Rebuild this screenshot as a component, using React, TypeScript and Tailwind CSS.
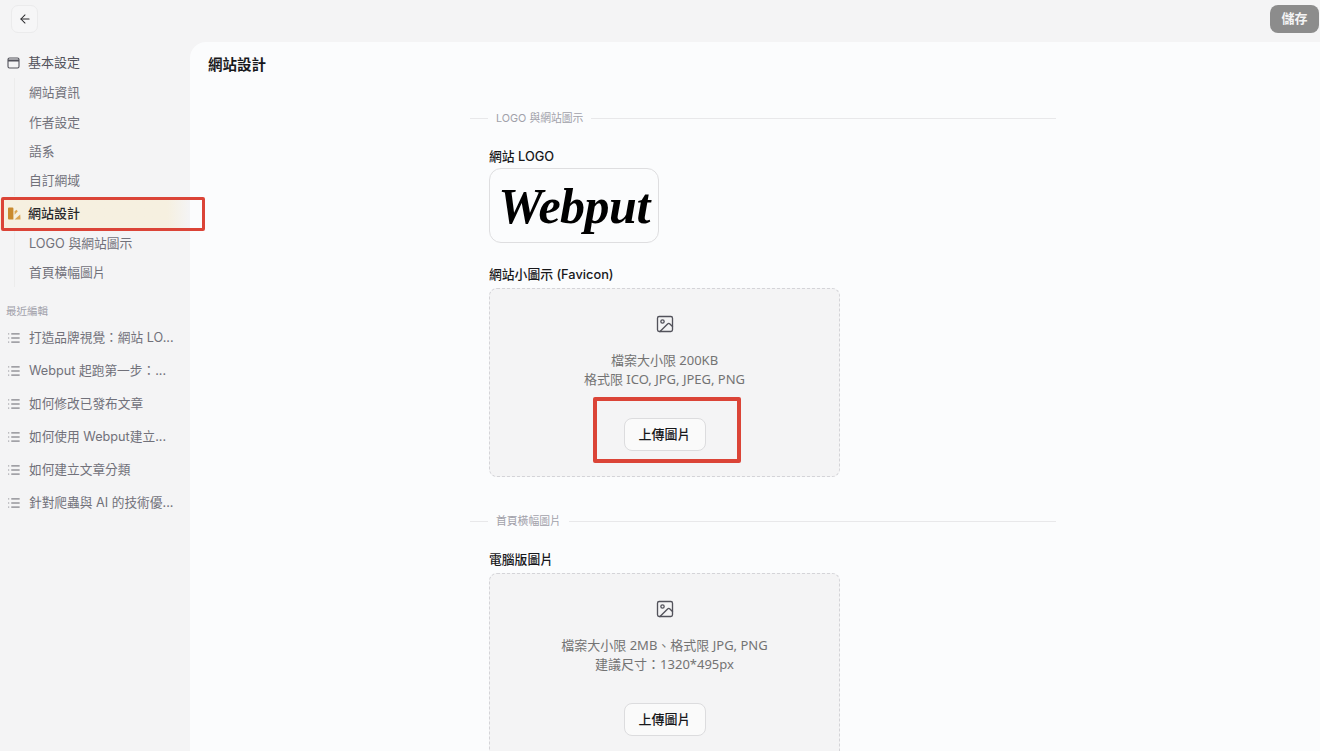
import { ArrowLeft, Image as ImageIcon, List } from "lucide-react";

const font = "font-['Inter','Noto_Sans_CJK_TC',sans-serif]";

const basicLinks = ["網站資訊", "作者設定", "語系", "自訂網域"];
const designLinks = ["LOGO 與網站圖示", "首頁橫幅圖片"];
const recentPosts = [
  "打造品牌視覺：網站 LO...",
  "Webput 起跑第一步：...",
  "如何修改已發布文章",
  "如何使用 Webput建立...",
  "如何建立文章分類",
  "針對爬蟲與 AI 的技術優...",
];

function SubLinks({ items }: { items: string[] }) {
  return (
    <div className="ml-[14px] flex flex-col border-l border-[#ececec] pl-[14px]">
      {items.map((item) => (
        <div key={item} className="flex h-[29.4px] items-center text-[12.75px] text-[#71717a]">
          {item}
        </div>
      ))}
    </div>
  );
}

function Sidebar() {
  return (
    <aside className="flex w-[190px] shrink-0 flex-col pt-[6px]">
      <div className="flex h-[30px] items-center pl-[7px]">
        <svg width="13" height="12" viewBox="0 0 13 12" fill="none" stroke="#52525b" strokeWidth="1.1">
          <rect x="1" y="1" width="11" height="10" rx="1.5" />
          <path d="M1 3.5h11" strokeWidth="2" />
        </svg>
        <span className="ml-[8px] text-[13px] text-[#52525b]">基本設定</span>
      </div>
      <SubLinks items={basicLinks} />
      <div className="relative mt-[3px] flex h-[30px] items-center bg-linear-to-r from-[#f6f0e0] from-88% to-[#f4f4f5] pl-[7px]">
        <svg width="14" height="13" viewBox="0 0 14 13" fill="#c98a2e">
          <path d="M1 1.6A1 1 0 0 1 2 .6h3.4a1 1 0 0 1 1 1v10.8H2a1 1 0 0 1-1-1z" />
          <path d="M7.6 4.4l1.7-1.7 1.5 1.5-3.2 3.6z" fill="#dba552" />
          <path d="M7.6 12.4l5.6-5 .3 5z" fill="#dba552" />
        </svg>
        <span className="ml-[7px] text-[13px] font-medium text-[#27272a]">網站設計</span>
        <div className="absolute top-[-2px] -right-[15px] left-[1px] h-[34px] rounded-[2px] border-[3px] border-[#db4437]" />
      </div>
      <SubLinks items={designLinks} />
      <div className="mt-[17px] pl-[6px] text-[10.5px] text-[#a1a1aa]">最近編輯</div>
      <div className="mt-[1px] flex flex-col">
        {recentPosts.map((post) => (
          <div key={post} className="flex h-[33px] items-center pl-[7px]">
            <List size={14} strokeWidth={1.5} className="text-[#52525b]" />
            <span className="ml-[8px] text-[12.7px] whitespace-nowrap text-[#71717a]">{post}</span>
          </div>
        ))}
      </div>
    </aside>
  );
}

function SectionTitle({ children }: { children: string }) {
  return (
    <div className="flex items-center">
      <div className="h-px w-[18px] bg-[#e8e8ea]" />
      <span className="mx-[8px] pt-[2px] text-[10.8px] leading-[16px] text-[#a1a1aa]">{children}</span>
      <div className="h-px flex-1 bg-[#e8e8ea]" />
    </div>
  );
}

function FieldLabel({ children }: { children: string }) {
  return <div className="text-[12.8px] leading-[22px] font-medium text-[#18181b]">{children}</div>;
}

function UploadButton() {
  return (
    <div className="flex h-[33px] w-[82px] items-center justify-center rounded-[8px] border border-[#dcdcde] bg-[#fafafa] text-[13px] font-medium text-[#18181b]">
      上傳圖片
    </div>
  );
}

function DropZone({ lines, highlight }: { lines: string[]; highlight?: boolean }) {
  return (
    <div className="mt-[2px] flex h-[189px] w-[351px] flex-col items-center rounded-[8px] border border-dashed border-[#d4d4d8] bg-[#f4f4f5] pt-[25px]">
      <ImageIcon size={20} strokeWidth={1.6} className="text-[#52525b]" />
      <div className="mt-[17px] text-center font-['Noto_Sans','Noto_Sans_CJK_TC',sans-serif] text-[13px] leading-[19px] text-[#737373]">
        {lines.map((line) => (
          <div key={line}>{line}</div>
        ))}
      </div>
      <div className="relative mt-[29px]">
        <UploadButton />
        {highlight && (
          <div className="absolute -top-[21px] -left-[31px] h-[66px] w-[148px] rounded-[2px] border-[4px] border-[#db4437]" />
        )}
      </div>
    </div>
  );
}

export default function App() {
  return (
    <div className={`flex h-[751px] w-[1320px] flex-col overflow-hidden bg-[#f4f4f5] ${font}`}>
      <header className="flex h-[42px] shrink-0 items-start justify-between pt-[5px] pr-[1px] pl-[11px]">
        <div className="flex h-[28px] w-[27px] items-center justify-center rounded-[7px] border border-[#ebebec] bg-[#f6f6f7]">
          <ArrowLeft size={14} strokeWidth={1.75} className="text-[#27272a]" />
        </div>
        <div className="flex h-[28px] w-[49px] items-center justify-center rounded-[8px] bg-[#8c8c8c] text-[13px] font-semibold text-[#f4f4f5]">
          儲存
        </div>
      </header>
      <div className="flex min-h-0 flex-1">
        <Sidebar />
        <main className="min-w-0 flex-1 rounded-tl-[16px] bg-[#fbfcfd]">
          <h1 className="pt-[12px] pl-[18px] text-[14.5px] leading-[22px] font-semibold text-[#18181b]">網站設計</h1>
          <div className="mt-[33px] ml-[280px] w-[586px]">
            <SectionTitle>LOGO 與網站圖示</SectionTitle>
            <div className="pl-[19px]">
              <div className="mt-[19px]">
                <FieldLabel>網站 LOGO</FieldLabel>
              </div>
              <div className="flex h-[75px] w-[170px] items-center justify-center rounded-[12px] border border-[#dedee0] bg-[#fbfcfd]">
                <span className="font-['Liberation_Serif',serif] text-[50px] leading-none font-bold tracking-[-0.5px] text-black italic">
                  Webput
                </span>
              </div>
              <div className="mt-[21px]">
                <FieldLabel>網站小圖示 (Favicon)</FieldLabel>
              </div>
              <DropZone lines={["檔案大小限 200KB", "格式限 ICO, JPG, JPEG, PNG"]} highlight />
            </div>
            <div className="mt-[35px]">
              <SectionTitle>首頁橫幅圖片</SectionTitle>
            </div>
            <div className="pl-[19px]">
              <div className="mt-[19px]">
                <FieldLabel>電腦版圖片</FieldLabel>
              </div>
              <DropZone lines={["檔案大小限 2MB、格式限 JPG, PNG", "建議尺寸：1320*495px"]} />
            </div>
          </div>
        </main>
      </div>
    </div>
  );
}
